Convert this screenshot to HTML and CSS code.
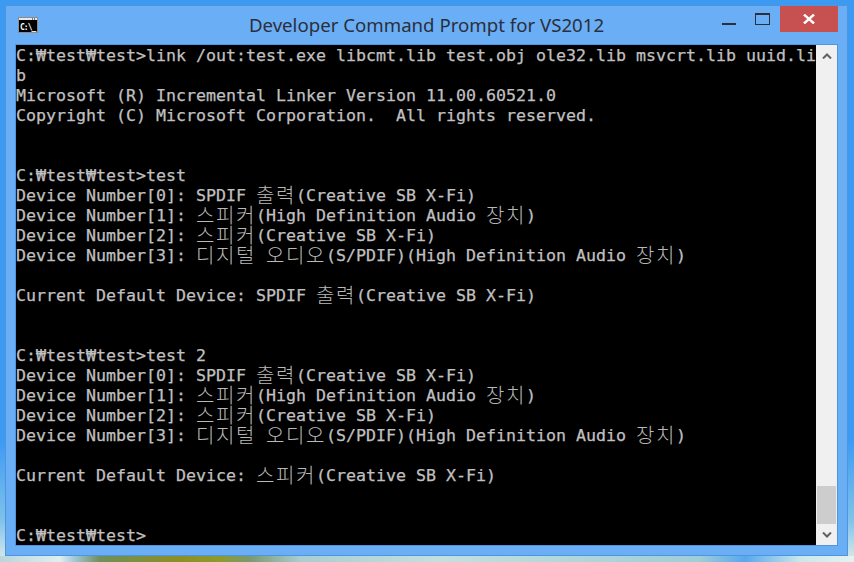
FILE: index.html
```html
<!DOCTYPE html>
<html lang="ko">
<head>
<meta charset="utf-8">
<title>Developer Command Prompt for VS2012</title>
<link rel="stylesheet" href="styles.css">
</head>
<body>
<div class="window">
  <header class="titlebar">
    <svg class="app-icon" width="20" height="16" viewBox="0 0 20 16">
      <rect width="20" height="16" fill="#8c8c8c"/>
      <rect x="1" y="1" width="18" height="2" fill="#e8e8e8"/>
      <rect x="14" y="1" width="1" height="2" fill="#777"/>
      <rect x="16" y="1" width="1" height="2" fill="#777"/>
      <rect x="1" y="3" width="18" height="12" fill="#000"/>
      <text class="app-icon-text" x="2" y="13">C:\_</text>
    </svg>
    <div class="title">Developer Command Prompt for VS2012</div>
    <div class="controls">
      <div class="minimize"></div>
      <div class="maximize"></div>
      <div class="close">
        <svg width="12" height="10" viewBox="0 0 12 10"><path d="M1 0.5 11 9.5M11 0.5 1 9.5" stroke="#fff" stroke-width="2.4" fill="none"/></svg>
      </div>
    </div>
  </header>
  <div class="client">
    <main class="console">
<div class="line">C:₩test₩test&gt;link /out:test.exe libcmt.lib test.obj ole32.lib msvcrt.lib uuid.li</div>
<div class="line">b</div>
<div class="line">Microsoft (R) Incremental Linker Version 11.00.60521.0</div>
<div class="line">Copyright (C) Microsoft Corporation.  All rights reserved.</div>
<div class="line"></div>
<div class="line"></div>
<div class="line">C:₩test₩test&gt;test</div>
<div class="line">Device Number[0]: SPDIF <span class="ko">출력</span>(Creative SB X-Fi)</div>
<div class="line">Device Number[1]: <span class="ko">스피커</span>(High Definition Audio <span class="ko">장치</span>)</div>
<div class="line">Device Number[2]: <span class="ko">스피커</span>(Creative SB X-Fi)</div>
<div class="line">Device Number[3]: <span class="ko">디지털</span> <span class="ko">오디오</span>(S/PDIF)(High Definition Audio <span class="ko">장치</span>)</div>
<div class="line"></div>
<div class="line">Current Default Device: SPDIF <span class="ko">출력</span>(Creative SB X-Fi)</div>
<div class="line"></div>
<div class="line"></div>
<div class="line">C:₩test₩test&gt;test 2</div>
<div class="line">Device Number[0]: SPDIF <span class="ko">출력</span>(Creative SB X-Fi)</div>
<div class="line">Device Number[1]: <span class="ko">스피커</span>(High Definition Audio <span class="ko">장치</span>)</div>
<div class="line">Device Number[2]: <span class="ko">스피커</span>(Creative SB X-Fi)</div>
<div class="line">Device Number[3]: <span class="ko">디지털</span> <span class="ko">오디오</span>(S/PDIF)(High Definition Audio <span class="ko">장치</span>)</div>
<div class="line"></div>
<div class="line">Current Default Device: <span class="ko">스피커</span>(Creative SB X-Fi)</div>
<div class="line"></div>
<div class="line"></div>
<div class="line">C:₩test₩test&gt;</div>
    </main>
    <aside class="scrollbar">
      <div class="arrow">
        <svg width="10" height="6" viewBox="0 0 10 6"><path d="M1 5.5 5 1.5 9 5.5" stroke="#606060" stroke-width="2" fill="none"/></svg>
      </div>
      <div class="track"><div class="thumb"></div></div>
      <div class="arrow">
        <svg width="10" height="6" viewBox="0 0 10 6"><path d="M1 0.5 5 4.5 9 0.5" stroke="#606060" stroke-width="2" fill="none"/></svg>
      </div>
    </aside>
  </div>
</div>
</body>
</html>
```
FILE: styles.css
```css
html, body {
  margin: 0;
  height: 100%;
}
body {
  width: 854px;
  height: 562px;
  overflow: hidden;
  box-sizing: border-box;
  padding: 5px 6px 6px 5px;
  background:
    linear-gradient(90deg, #b7d6dd 0, #dfeef0 60px, #9fc7d6 75px, #6f8f5c 100px, #8d8f24 180px, #8f9a2e 220px, #7a9a70 250px, #a8cdd4 300px, #c2e0e0 440px, #9fcdd8 700px, #57a8ee 745px, #c8e8ec 800px, #e4f2f2 854px) 0 556px / 100% 6px no-repeat,
    linear-gradient(180deg, #3c9af3 0, #3c9af3 440px, #7fc2ea 520px, #cfe6ea 556px);
}
.window {
  box-sizing: border-box;
  width: 843px;
  height: 551px;
  display: flex;
  flex-direction: column;
  background: #6aaef6;
  border: 1px solid #4f94dc;
  padding: 0 9px 10px 9px;
}
.titlebar {
  height: 38px;
  flex: none;
  display: grid;
  grid-template-columns: 1fr auto 1fr;
  align-items: start;
}
.app-icon {
  display: block;
  margin: 11px 0 0 3px;
}
.app-icon-text {
  font-family: "DejaVu Sans Mono", monospace;
  font-size: 8px;
  font-weight: bold;
  fill: #fff;
  letter-spacing: -1px;
}
.title {
  font-family: "Noto Sans", sans-serif;
  font-size: 18.65px;
  line-height: 24px;
  margin-top: 7px;
  color: #2b2f3b;
  white-space: nowrap;
}
.controls {
  display: flex;
  justify-content: flex-end;
  align-items: flex-start;
}
.minimize {
  width: 14px;
  height: 2px;
  background: #2b2f3b;
  margin: 17px 19px 0 0;
}
.maximize {
  box-sizing: border-box;
  width: 15px;
  height: 12px;
  border: 1px solid #2b2f3b;
  border-top-width: 2px;
  margin: 7px 10px 0 0;
}
.close {
  width: 58px;
  height: 26px;
  background: #c75050;
  display: flex;
  align-items: center;
  justify-content: center;
}
.client {
  display: flex;
  border: 1px solid #4f94dc;
  width: 823px;
  height: 502px;
  box-sizing: border-box;
}
.console {
  width: 800px;
  height: 500px;
  flex: none;
  background: #000;
  color: #c0c0c0;
  font-family: "DejaVu Sans Mono", "Noto Sans CJK KR", monospace;
  font-size: 16.61px;
  line-height: 20px;
  -webkit-text-stroke: 0.25px #c0c0c0;
}
.line {
  box-sizing: border-box;
  height: 20px;
  padding-top: 1px;
  white-space: pre;
}
.ko {
  font-family: "Noto Sans CJK KR", sans-serif;
  font-size: 20px;
  font-weight: 300;
  letter-spacing: 1.6px;
  color: #b8b8b8;
  -webkit-text-stroke: 0;
  line-height: 1px;
  vertical-align: -2px;
}
.scrollbar {
  flex: 1;
  display: flex;
  flex-direction: column;
  background: #f0f0f0;
}
.arrow {
  height: 21px;
  flex: none;
  display: flex;
  align-items: center;
  justify-content: center;
}
.track {
  flex: 1;
  display: flex;
  flex-direction: column;
  justify-content: flex-end;
  padding: 0 1px;
}
.thumb {
  height: 38px;
  background: #cdcdcd;
}
```
